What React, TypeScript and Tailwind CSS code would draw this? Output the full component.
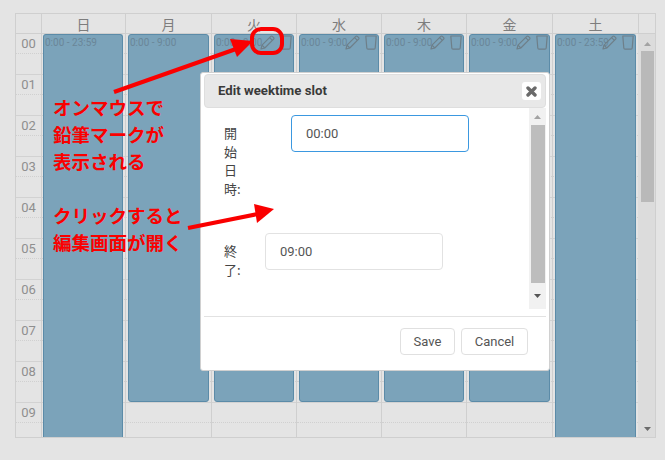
import React from "react";

const cjk = { fontFamily: '"Noto Sans CJK JP", "Noto Sans", sans-serif' };
const hours = ["00", "01", "02", "03", "04", "05", "06", "07", "08", "09"];

const days = [
  { name: "日", w: "w-[84px]", left: "left-[1px]", label: "0:00 - 23:59", h: "h-[404px]", icons: 0, rounded: false },
  { name: "月", w: "w-[86px]", left: "left-[2px]", label: "0:00 - 9:00", h: "h-[368px]", icons: 0, rounded: true },
  { name: "火", w: "w-[85px]", left: "left-[2px]", label: "0:00 - 9:00", h: "h-[368px]", icons: 1, rounded: true },
  { name: "水", w: "w-[85px]", left: "left-[2px]", label: "0:00 - 9:00", h: "h-[368px]", icons: 1, rounded: true },
  { name: "木", w: "w-[85px]", left: "left-[2px]", label: "0:00 - 9:00", h: "h-[368px]", icons: 1, rounded: true },
  { name: "金", w: "w-[86px]", left: "left-[2px]", label: "0:00 - 9:00", h: "h-[368px]", icons: 1, rounded: true },
  { name: "土", w: "w-[86px]", left: "left-[2px]", label: "0:00 - 23:59", h: "h-[404px]", icons: 1, rounded: false },
];

function Pencil() {
  return (
    <svg width="15" height="15" viewBox="0 0 15 15" fill="none" stroke="#6e7f89" strokeWidth="1.2" strokeLinejoin="round">
      <path d="M1 14 L2 10.2 L10.8 1.4 Q11.6 0.7 12.4 1.4 L13.6 2.6 Q14.3 3.4 13.6 4.2 L4.8 13 Z" />
      <path d="M2 10.2 L4.8 13 M9.6 2.6 L12.4 5.4" />
    </svg>
  );
}

function Trash() {
  return (
    <svg width="12" height="15" viewBox="0 0 12 15" fill="none" stroke="#6e7f89" strokeWidth="1.2" strokeLinejoin="round">
      <path d="M0.8 1 H11.2 L10.2 13 Q10.1 14.2 9 14.2 H3 Q1.9 14.2 1.8 13 Z" />
    </svg>
  );
}

function Tri({ up, color }: { up?: boolean; color: string }) {
  return (
    <svg width="7" height="4" viewBox="0 0 7 4" fill={color}>
      <polygon points={up ? "3.5,0 7,4 0,4" : "0,0 7,0 3.5,4"} />
    </svg>
  );
}

function HourRow() {
  return (
    <div className="h-[41px] border-b border-[#d2d2d2] flex flex-col">
      <div className="h-[20px] border-b border-dotted border-[#d0d0d0]" />
    </div>
  );
}

export default function App() {
  return (
    <div
      className="relative w-[665px] h-[460px] overflow-hidden bg-[#e4e4e4] pt-[13px] pl-[15px]"
      style={{ fontFamily: 'Roboto, "Noto Sans CJK JP", sans-serif' }}
    >
      {/* Calendar */}
      <div className="w-[641px] h-[425px] border border-[#cfcfcf] flex flex-col overflow-hidden">
        <div className="flex h-[20px] shrink-0 border-b border-[#cfcfcf]">
          <div className="w-[25px] shrink-0" />
          {days.map((d) => (
            <div
              key={d.name}
              className={`${d.w} shrink-0 border-l border-[#cfcfcf] flex items-center justify-center text-[14px] leading-none text-[#7d7d7d]`}
              style={cjk}
            >
              {d.name}
            </div>
          ))}
          <div className="flex-1 border-l border-[#cfcfcf]" />
        </div>

        <div className="flex flex-1 min-h-0">
          <div className="w-[25px] shrink-0">
            {hours.map((h) => (
              <div key={h} className="h-[41px] border-b border-[#d2d2d2] relative text-center">
                <div className="h-[20px] border-b border-dotted border-[#d0d0d0] text-[13px] leading-[20px] text-[#8f8f8f]">{h}</div>
              </div>
            ))}
          </div>

          {days.map((d) => (
            <div key={d.name} className={`${d.w} shrink-0 relative border-l border-[#cfcfcf]`}>
              {hours.map((h) => (
                <HourRow key={h} />
              ))}
              <div
                className={`absolute top-0 ${d.left} right-[2px] ${d.h} bg-[#7ba3ba] border-x border-[#5b8ba8] border-t ${
                  d.rounded ? "rounded-[3px] border-b" : "rounded-t-[3px]"
                }`}
              >
                <div className="flex items-start pl-[1px]">
                  <span className="text-[10px] leading-[14px] mt-[1px] text-[#6a8698] whitespace-nowrap">{d.label}</span>
                </div>
                {d.icons === 1 && (
                  <div className="absolute top-0 right-[1px] flex items-start gap-[5px]">
                    <Pencil />
                    <Trash />
                  </div>
                )}
              </div>
            </div>
          ))}

          {/* Outer scrollbar */}
          <div className="flex-1 bg-[#dcdcdc] flex flex-col items-center pl-[1px]">
            <div className="h-[17px] flex items-center justify-center pt-[2px]">
              <Tri up color="#a3a3a3" />
            </div>
            <div className="w-[13px] h-[151px] bg-[#b9b9b9]" />
            <div className="flex-1" />
            <div className="h-[17px] flex items-center justify-center">
              <Tri color="#6b6b6b" />
            </div>
          </div>
        </div>
      </div>

      {/* Annotation text */}
      <div
        className="absolute left-[53px] top-[94px] text-[18.5px] leading-[27px] font-bold text-[#fa0000] whitespace-nowrap"
        style={cjk}
      >
        <div>オンマウスで</div>
        <div>鉛筆マークが</div>
        <div>表示される</div>
        <div className="h-[27px]" />
        <div>クリックすると</div>
        <div>編集画面が開く</div>
      </div>

      {/* Dialog */}
      <div className="absolute left-[200px] top-[72px] w-[350px] h-[299px] bg-white border border-[#d0d0d0] rounded-[3px] px-[3px] pt-[1px] flex flex-col">
        <div className="h-[34px] shrink-0 bg-[#e8e8e8] border border-[#dedede] rounded-[4px] flex items-center justify-between pl-[13px] pr-[3px]">
          <span className="text-[13.2px] font-bold text-[#3a3a3a]">Edit weektime slot</span>
          <span className="w-[19px] h-[18px] bg-white rounded-[3px] flex items-center justify-center mr-[1px]">
            <svg width="11" height="11" viewBox="0 0 11 11" stroke="#6a6a6a" strokeWidth="3.4" strokeLinecap="round">
              <path d="M2 2 L9 9 M9 2 L2 9" />
            </svg>
          </span>
        </div>

        <div className="h-[201px] shrink-0 flex">
          <div className="flex-1 pl-[20px] pt-[7px] text-[13px] text-[#555]">
            <div className="flex items-start mb-[34px]">
              <label className="w-[20px] pt-[9px] leading-[18.7px] break-all text-[#444]" style={cjk}>
                開始日時:
              </label>
              <div className="ml-[47px] w-[178px] h-[37px] border border-[#3b98e0] rounded-[4px] flex items-center pl-[14px]">
                00:00
              </div>
            </div>
            <div className="flex items-start">
              <label className="w-[20px] pt-[9px] leading-[18.7px] break-all text-[#444]" style={cjk}>
                終了:
              </label>
              <div className="ml-[21px] w-[178px] h-[37px] border border-[#e2e2e2] rounded-[4px] flex items-center pl-[14px]">
                09:00
              </div>
            </div>
          </div>
          <div className="w-[17px] bg-[#f1f1f1] flex flex-col items-center">
            <div className="h-[17px] flex items-center justify-center">
              <Tri up color="#a3a3a3" />
            </div>
            <div className="w-[14px] h-[158px] bg-[#bdbdbd]" />
            <div className="flex-1 flex items-center justify-center">
              <Tri color="#555555" />
            </div>
          </div>
        </div>

        <div className="mt-[7px] border-t border-[#e2e2e2] flex justify-end gap-[6px] pt-[11px] pr-[18px]">
          <button className="w-[55px] h-[27px] border border-[#e0e0e0] rounded-[4px] bg-white text-[13px] text-[#555]">Save</button>
          <button className="w-[67px] h-[27px] border border-[#e0e0e0] rounded-[4px] bg-white text-[13px] text-[#555]">Cancel</button>
        </div>
      </div>

      {/* Red highlight around the pencil */}
      <div className="absolute left-[250px] top-[27px] w-[34px] h-[28px] border-[4px] border-[#fa0000] rounded-[11px]" />

      {/* Arrows */}
      <svg className="absolute inset-0 pointer-events-none" width="665" height="460" viewBox="0 0 665 460">
        <line x1="114" y1="92" x2="236" y2="49" stroke="#fa0000" strokeWidth="4" />
        <polygon points="253,41 230,39 237,57" fill="#fa0000" />
        <line x1="188" y1="228" x2="258" y2="214" stroke="#fa0000" strokeWidth="4" />
        <polygon points="274,209 254,204 257,223" fill="#fa0000" />
      </svg>
    </div>
  );
}
